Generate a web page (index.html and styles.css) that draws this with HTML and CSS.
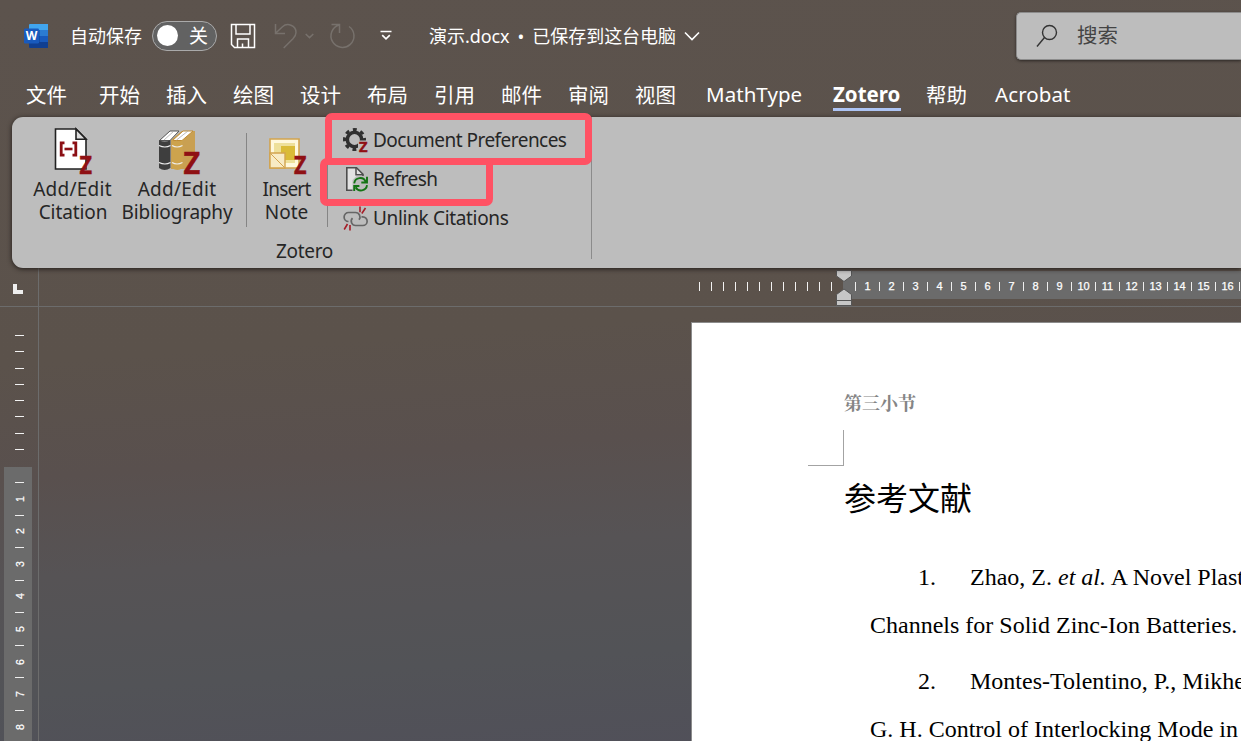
FILE: index.html
```html
<!DOCTYPE html>
<html lang="zh-CN">
<head>
<meta charset="utf-8">
<title>演示.docx</title>
<link rel="stylesheet" href="styles.css">
</head>
<body>
<div class="app">
  <header class="titlebar">
    <svg class="word" width="25" height="26" viewBox="0 0 25 26">
      <path d="M5 2q0-1 1-1h18v6H5z" fill="#41a5ee"/><path d="M5 7h19v6H5z" fill="#2b7cd3"/><path d="M5 13h19v6H5z" fill="#185abd"/><path d="M5 19h19v6H6q-1 0-1-1z" fill="#103f91"/>
      <path d="M5 7h11v14H5z" fill="#103f91" opacity=".5"/>
      <rect x="0" y="5.500" width="15" height="15" rx="1.300" fill="#185abd"/>
      <text x="7.500" y="17.300" text-anchor="middle" class="word-letter">W</text>
    </svg>
    <span class="autosave">自动保存</span>
    <span class="toggle"><i class="knob"></i><span>关</span></span>
    <svg class="save" width="26" height="26" viewBox="0 0 26 26" fill="none" stroke="#fff" stroke-width="1.500"><path d="M1.500 1.500h23v23h-20l-3-3zM6 2v9h14V2M7.500 24v-8h11v8M12.500 24v-3.500"/></svg>
    <svg class="undo" width="24" height="26" viewBox="0 0 24 26" fill="none" stroke="#77716c" stroke-width="1.500"><path d="M1.500 1v9.500H11M1.800 10L8.500 3.800C13-.5 22 2 22 9.500c0 3-1.300 4.500-3 6.300L9.700 25"/></svg>
    <svg class="undo-more" width="9" height="6" viewBox="0 0 9 6" fill="none" stroke="#77716c" stroke-width="1.500"><path d="M.7 1l3.800 3.600L8.300 1"/></svg>
    <svg class="redo" width="26" height="26" viewBox="0 0 26 26" fill="none" stroke="#77716c" stroke-width="1.500"><path d="M1.500 1.500h8v8.500M9 2A11.500 11.500 0 1 0 19 3.500"/></svg>
    <svg class="more" width="12" height="11" viewBox="0 0 12 11" fill="none" stroke="#fff" stroke-width="1.700"><path d="M.5 1.500h11M2.200 5.200L6 8.800l3.800-3.600"/></svg>
    <span class="docname">演示.docx<b class="dot">•</b>已保存到这台电脑</span>
    <svg class="doc-more" width="16" height="10" viewBox="0 0 16 10" fill="none" stroke="#fff" stroke-width="1.600"><path d="M1 1.500l7 7 7-7"/></svg>
    <div class="search">
      <svg width="22" height="24" viewBox="0 0 22 24" fill="none" stroke="#333" stroke-width="1.400"><circle cx="13.500" cy="8.500" r="7"/><path d="M8.500 13.500L1 22.500"/></svg>
      <span>搜索</span>
    </div>
  </header>

  <nav class="tabs">
    <span>文件</span><span>开始</span><span>插入</span><span>绘图</span><span>设计</span><span>布局</span><span>引用</span><span>邮件</span><span>审阅</span><span>视图</span><span class="latin math">MathType</span><span class="latin active">Zotero</span><span class="help">帮助</span><span class="latin acrobat">Acrobat</span>
  </nav>

  <section class="ribbon">
    <div class="group">
      <div class="tools">
        <div class="big cite">
          <svg width="44" height="48" viewBox="0 0 44 48">
            <path d="M4.500 3h20.500l10 10v30H4.500z" fill="#fff" stroke="#222" stroke-width="1.600"/>
            <path d="M25 3v10.200h10z" fill="#ddd" stroke="#222" stroke-width="1.600"/>
            <path d="M13.500 16.800H10.200v12.400h3.300M21.500 16.800h3.300v12.400h-3.300" fill="none" stroke="#8b0f14" stroke-width="2.800"/><path d="M13.500 23h8" stroke="#8b0f14" stroke-width="2.600"/>
            <text x="28.500" y="48" textLength="12.500" lengthAdjust="spacingAndGlyphs" class="zed">Z</text>
          </svg>
          <span class="addedit">Add/Edit</span><span class="citation">Citation</span>
        </div>
        <div class="big bib">
          <svg width="44" height="48" viewBox="0 0 44 48">
            <path d="M14 14L25 5h13v31l-9 7H14z" fill="#c9a052"/><path d="M15.500 14.500L26 5h10L25 14.500z" fill="#fff" stroke="#c08d35"/>
            <path d="M2.500 14.500L13 5h9L13 14.500z" fill="#fff" stroke="#555"/><path d="M7 14L17 5M19.500 14L31 5" stroke="#aaa" stroke-width=".8"/>
            <path d="M2 14q5.500 3 11.500 0v28q-6 4-11.500 0z" fill="#3e3e3e"/><path d="M15 14q5 3 10.500 0v28q-5 4-10.500 0z" fill="#cda34d"/>
            <path d="M2 19.500q6 3 11.500 0M2 36.500q6 3 11.500 0M15 19.500q5 3 10.500 0M15 36.500q5 3 10.500 0" fill="none" stroke="#eee" stroke-width="1.200"/>
            <text x="26.500" y="48" textLength="16.500" lengthAdjust="spacingAndGlyphs" class="zed large">Z</text>
          </svg>
          <span class="addedit">Add/Edit</span><span>Bibliography</span>
        </div>
        <i class="rule"></i>
        <div class="big note">
          <svg width="44" height="48" viewBox="0 0 44 48">
            <path d="M5 13h29v29H5z" fill="#fff8dc" stroke="#d2a44f" stroke-width="1.600"/><path d="M9 17h21v20H9z" fill="#eee09a"/><path d="M16 20h14v14H16z" fill="#dabb37"/>
            <path d="M5 27h15v15H5z" fill="#f8ebc5" stroke="#d2a44f" stroke-width="1.400"/><path d="M5 27l15 15" stroke="#d2a44f"/>
            <text x="29" y="48" textLength="12.500" lengthAdjust="spacingAndGlyphs" class="zed">Z</text>
          </svg>
          <span class="insert">Insert</span><span>Note</span>
        </div>
        <i class="rule"></i>
        <div class="list">
          <div class="row">
            <svg width="26" height="26" viewBox="0 0 26 26"><circle cx="11.500" cy="12.500" r="7.200" fill="none" stroke="#303030" stroke-width="3.600"/><circle cx="11.500" cy="12.500" r="10" fill="none" stroke="#303030" stroke-width="3" stroke-dasharray="3.930 3.924" stroke-dashoffset="1.965"/><rect x="15" y="13.500" width="11" height="12.500" fill="#bdbdbd"/><text x="16" y="25" textLength="8.500" lengthAdjust="spacingAndGlyphs" class="zed tiny">Z</text></svg>
            <span class="pref">Document Preferences</span>
          </div>
          <div class="row">
            <svg width="26" height="26" viewBox="0 0 26 26" fill="none"><path d="M3.800 1.800h9.700l6.500 6.500v16H3.800z" fill="#e2e2e2" stroke="#4d4d4d" stroke-width="1.600"/><path d="M13 1.800v7h7" stroke="#4d4d4d" stroke-width="1.500"/><path d="M9.500 26V14l4-4h12v16z" fill="#bdbdbd"/><path d="M11.200 17.300a6 6 0 0 1 11.500-1.500M24 19.200a6 6 0 0 1-11.300 2M24 10.800v5.700h-5.700M11.200 25v-5h5.200" stroke="#147414" stroke-width="1.900"/></svg>
            <span class="refresh">Refresh</span>
          </div>
          <div class="row">
            <svg width="26" height="26" viewBox="0 0 26 26" fill="none"><path d="M5.500 16.500A4.500 4.500 0 0 1 5.700 7.500h6.800a4.500 4.500 0 0 1 3.500 7.300M18.500 11.800h1.300a4.300 4.300 0 0 1 0 8.700h-7a4.300 4.300 0 0 1-3.300-7.300" stroke="#666" stroke-width="1.700"/><path d="M17 1.500v5.800M22.500 3l-3.700 5.500M4.500 19l-3.300 5.500M7 20v5.500" stroke="#a51d27" stroke-width="1.600"/></svg>
            <span class="unlink">Unlink Citations</span>
          </div>
        </div>
      </div>
      <div class="group-name">Zotero</div>
    </div>
    <i class="callout one"></i>
    <i class="callout two"></i>
  </section>

  <div class="hruler">
    <div class="corner"><i></i></div>
    <div class="track">
      <div class="margin-ticks"><i></i><i></i><i></i><i></i><i></i><i></i><i></i><i></i><i></i><i></i><i></i><i></i></div>
      <div class="scale"><b>1</b><b>2</b><b>3</b><b>4</b><b>5</b><b>6</b><b>7</b><b>8</b><b>9</b><b>10</b><b>11</b><b>12</b><b>13</b><b>14</b><b>15</b><b>16</b><b></b></div>
      <svg class="indent" width="16" height="36" viewBox="0 0 16 36"><path d="M.5.500h15V6L8 11.500.5 6z" fill="#c6c6c6" stroke="#555"/><path d="M8 19l7.500 5.500V35.500H.5V24.500z" fill="#c6c6c6" stroke="#555"/><path d="M0 30.500h16" stroke="#555"/></svg>
    </div>
  </div>

  <main class="work">
    <div class="vruler">
      <div class="margin-ticks"><i></i><i></i><i></i><i></i><i></i><i></i><i></i><i></i></div>
      <div class="scale"><b><em>1</em></b><b><em>2</em></b><b><em>3</em></b><b><em>4</em></b><b><em>5</em></b><b><em>6</em></b><b><em>7</em></b><b><em>8</em></b></div>
    </div>
    <article class="page">
      <div class="section">第三小节</div>
      <i class="crop"></i>
      <h1>参考文献</h1>
      <p><span class="num">1.</span><span class="l1">Zhao, Z. <em>et al.</em> A Novel Plastic</span></p>
      <p class="cont"><span class="l2">Channels for Solid Zinc-Ion Batteries.</span></p>
      <p class="second"><span class="num">2.</span><span class="l3">Montes-Tolentino, P., Mikhe</span></p>
      <p class="cont"><span class="l4">G. H. Control of Interlocking Mode in</span></p>
    </article>
  </main>
</div>
</body>
</html>
```
FILE: styles.css
```css
* { box-sizing: border-box; }
body { margin: 0; overflow: hidden; }
i, em { font-style: normal; }
svg { display: block; flex: none; overflow: visible; }
.app {
  width: 1241px; height: 741px; overflow: hidden;
  display: flex; flex-direction: column;
  font-family: "Noto Sans", "Noto Sans CJK SC", sans-serif;
  color: #fff;
  background: linear-gradient(176deg, #5c534d 0, #5b524b 44%, #59504e 58%, #565355 70%, #525357 84%, #504f5a 100%);
}

/* Title bar */
.titlebar { height: 73px; flex: none; display: flex; align-items: center; padding: 0 0 2px 24px; font-size: 18px; white-space: nowrap; }
.titlebar > * { flex: none; }
.word-letter { font: bold 12px "Open Sans", sans-serif; fill: #fff; }
.autosave { margin-left: 22px; width: 72px; position: relative; top: -1px; left: -1px; }
.toggle { width: 65px; height: 30px; margin-left: 9px; border: 1px solid #aaa; border-radius: 15px; background: #626262; display: flex; align-items: center; padding: 0 8px 0 4px; justify-content: space-between; font-size: 19px; line-height: 26px; }
.knob { width: 21px; height: 21px; border-radius: 50%; background: #fff; }
.save { margin-left: 13px; }
.undo { margin-left: 18px; }
.undo-more { margin-left: 7px; }
.redo { margin-left: 16px; }
.more { margin-left: 24px; }
.docname { margin-left: 37px; width: 248px; padding-bottom: 2px; letter-spacing: -.05px; }
.dot { font-weight: 400; margin: 0 8px; }
.doc-more { margin-left: 7px; }
.search { margin-left: auto; width: 225px; height: 48px; border: 1px solid #8c8c8c; border-right: 0; border-radius: 5px 0 0 5px; background: #bdbdbd; box-shadow: 0 1px 3px #2c2724; color: #444; display: flex; align-items: center; gap: 19px; padding-left: 19px; font-size: 20.500px; }
.search span { padding-bottom: 3px; }

/* Ribbon tabs */
.tabs { height: 44px; flex: none; display: flex; gap: 26px; padding-left: 26px; font-size: 20.500px; white-space: nowrap; line-height: 44px; }
.tabs span { width: 41px; height: 38px; flex: none; }
.tabs span:first-child { margin-right: 6px; }
.tabs .latin { line-height: 43px; }
.tabs .math { width: 97px; margin-left: 4px; letter-spacing: .05px; }
.tabs .active { width: 68px; margin-left: 4px; font-weight: 700; border-bottom: 3px solid #adc4f4; }
.tabs .help { margin-left: -1px; }
.tabs .acrobat { width: 78px; margin-left: 2px; letter-spacing: .1px; }

/* Ribbon */
.ribbon { position: relative; height: 151px; flex: none; margin-left: 12px; border-radius: 11px 0 0 11px; background: #bdbdbd; box-shadow: 0 1px 5px #211c19; color: #262626; font-size: 19px; z-index: 1; }
.group { width: 580px; height: 142px; padding: 9px 0 0 16px; border-right: 1px solid #8b8b8b; }
.tools { height: 115px; display: flex; }
.big { display: flex; flex-direction: column; align-items: center; line-height: 23px; white-space: nowrap; flex: none; }
.big svg + span { margin-top: 4px; }
.addedit { letter-spacing: .25px; }
.citation { letter-spacing: -.1px; margin-left: 1px; }
.insert { letter-spacing: -.8px; }
.cite { width: 89px; }
.bib { width: 120px; letter-spacing: -.2px; }
.bib svg { margin-left: 4px; }
.note { width: 65px; margin-left: 7px; }
.rule { width: 1px; height: 94px; margin-top: 7px; margin-left: 9px; background: #858585; flex: none; }
.note + .rule { margin-left: 8px; }
.list { margin: -6px 0 0 15px; }
.row { height: 39px; display: flex; align-items: center; gap: 4px; white-space: nowrap; }
.pref { letter-spacing: -.53px; }
.refresh { letter-spacing: -.5px; }
.unlink { letter-spacing: -.33px; }
.group-name { text-align: center; line-height: 20px; padding-right: 10px; letter-spacing: -.3px; }
.zed { font: bold 25px "Open Sans", sans-serif; fill: #8f1014; stroke: #8f1014; stroke-width: .5px; }
.zed.large { font-size: 31px; }
.zed.tiny { font-size: 15px; }
.callout { position: absolute; border: 7px solid #ff5264; border-radius: 7px; }
.one { left: 313px; top: -4px; width: 267px; height: 52px; }
.two { left: 308px; top: 41px; width: 173px; height: 48px; }

/* Rulers */
.hruler { height: 39px; flex: none; display: flex; border-bottom: 1px solid #6c6c6c; }
.corner { width: 39px; border-right: 1px solid #6c6c6c; padding: 16px 0 0 13px; }
.corner i { display: block; width: 10px; height: 10px; border-left: 4px solid #eee; border-bottom: 4px solid #eee; }
.track { flex: 1; position: relative; display: flex; padding: 3px 0 0 660px; }
.hruler .margin-ticks { display: flex; width: 144px; padding-top: 11px; flex: none; }
.hruler .margin-ticks i { width: 12px; height: 9px; border-left: 1px solid #f2f2f2; }
.hruler .scale { height: 28px; width: 398px; overflow: hidden; flex: none; display: flex; padding: 11px 0 0 12px; background: #6b6b6b; font: 11px/9px "Liberation Sans", sans-serif; }
.hruler .scale b { width: 24px; height: 9px; flex: none; text-align: center; font-weight: 400; border-left: 1px solid #eee; color: #fff; -webkit-text-stroke: .25px #fff; }
.indent { position: absolute; left: 797px; top: 2px; }
.work { flex: 1; min-height: 0; display: flex; }
.vruler { width: 39px; flex: none; border-right: 1px solid #6c6c6c; padding: 28px 0 0 4px; overflow: hidden; }
.vruler .margin-ticks { height: 132px; padding-left: 11px; }
.vruler .margin-ticks i { display: block; width: 9px; height: 16.300px; border-top: 1px solid #f2f2f2; }
.vruler .scale { width: 28px; height: 290px; background: #6b6b6b; padding: 15px 0 0 11px; }
.vruler .scale b { display: flex; width: 9px; height: 32.550px; border-top: 1px solid #eee; align-items: center; justify-content: center; color: #fff; font: 10.500px/10px "Liberation Sans", sans-serif; -webkit-text-stroke: .25px #fff; }
.vruler .scale em { transform: rotate(-90deg); }

/* Document */
.page { margin: 15px 0 0 652px; width: 600px; flex: none; background: #fff; border: 1px solid #8c8c8c; border-bottom: 0; color: #000; padding: 66px 0 0 152px; font-family: "Liberation Serif", "Noto Sans CJK SC", serif; overflow: hidden; }
.section { font: 700 18px/27px "Noto Serif CJK SC", "Noto Sans CJK SC", serif; color: #858585; }
.crop { display: block; width: 36px; height: 36px; margin: 14px 0 0 -36px; border-right: 1px solid #a3a3a3; border-bottom: 1px solid #a3a3a3; }
h1 { margin: 5px 0 0; font: 400 32px/50px "Noto Sans CJK SC", sans-serif; }
p { margin: 32px 0 0 26px; font-size: 24px; line-height: 48px; white-space: nowrap; display: flex; }
p.cont { margin-top: 0; }
p.second { margin-top: 8px; }
p em { font-style: italic; }
.num { width: 66px; text-align: right; margin-right: 34px; }
```
